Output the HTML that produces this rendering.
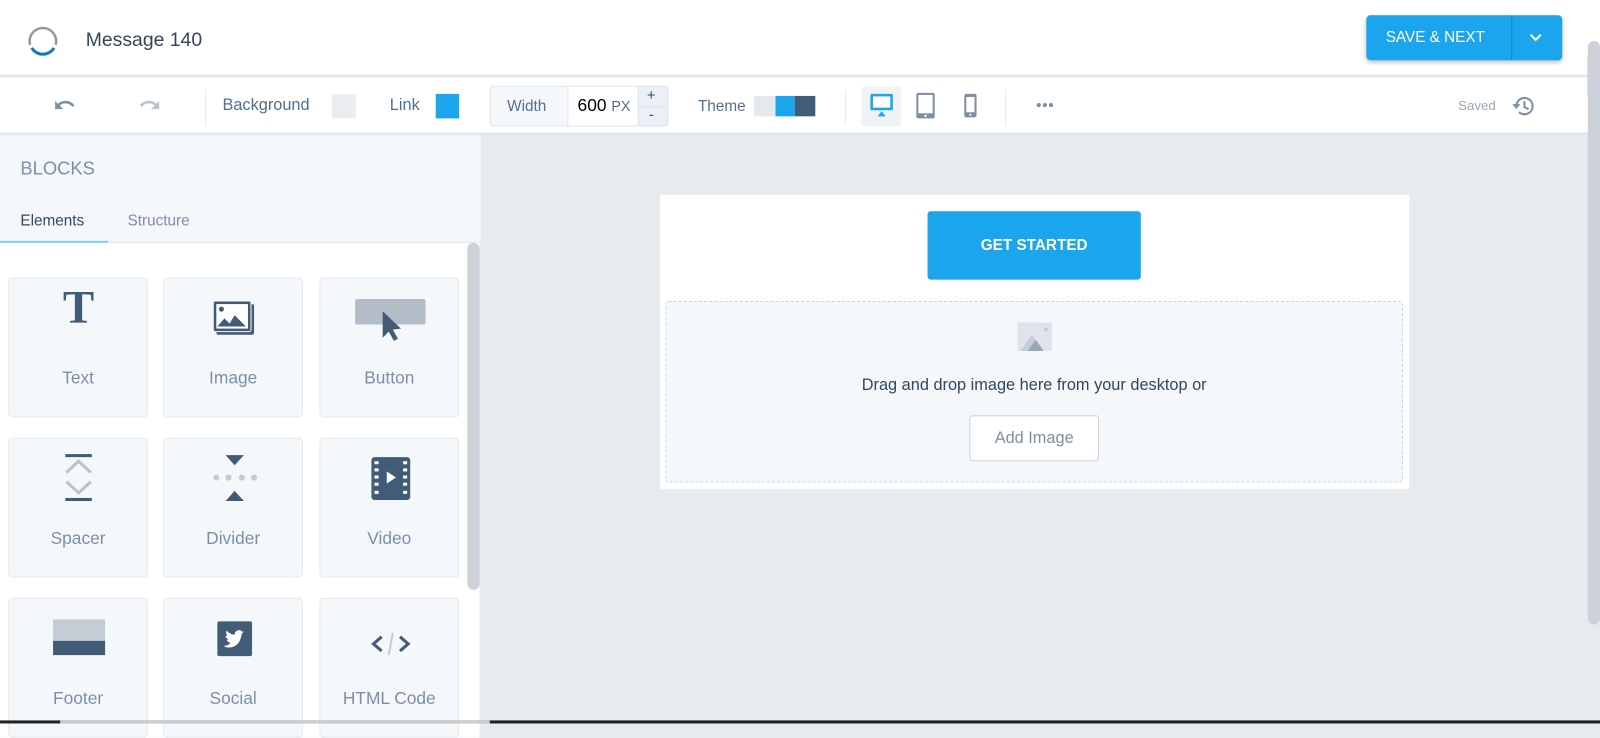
<!DOCTYPE html>
<html><head><meta charset="utf-8"><style>
*{box-sizing:border-box;margin:0;padding:0}
body{width:1600px;height:723px;overflow:hidden;font-family:"Liberation Sans",sans-serif;background:#e8ebee;position:relative;color:#33475b}
#w{position:absolute;left:0;top:0;width:1568px;height:709px;transform:scale(1.020408);transform-origin:0 0}
.abs{position:absolute}
.hdr{left:0;top:0;width:1568px;height:75px;background:#fff;border-bottom:2px solid #dfe3eb}
.tb{left:0;top:76px;width:1568px;height:56px;background:#fff;border-bottom:2px solid #dfe3eb}
.t{font-size:16px;color:#516f90}
.card{position:absolute;width:137px;height:137px;background:#f5f8fa;border:1px solid #e5e9ee;border-radius:4px}
.card span{position:absolute;left:0;right:0;top:88px;text-align:center;font-size:17px;color:#7c8fa6}
.card svg{position:absolute;left:0;top:0}
</style></head><body><div id="w">
<div class="abs hdr"></div>
<svg class="abs" style="left:24px;top:22px" width="36" height="36" viewBox="0 0 36 36"><path d="M5.5 22 A13 13 0 1 1 30.5 22" fill="none" stroke="#999" stroke-width="2.5"/><path d="M7 25 A13 13 0 0 0 29 25" fill="none" stroke="#0f7ac0" stroke-width="3"/></svg>
<div class="abs" style="left:84px;top:29px;font-size:19px;color:#33475b">Message 140</div>
<div class="abs" style="left:1339px;top:15px;width:192px;height:44px;background:#1ba5ec;border-radius:4px;box-shadow:0 2px 4px rgba(0,0,0,.25)"></div>
<div class="abs" style="left:1481px;top:15px;width:1px;height:44px;background:#1883be"></div>
<div class="abs" style="left:1358px;top:28px;font-size:15px;color:#fff">SAVE &amp; NEXT</div>
<svg class="abs" style="left:1497px;top:31px" width="16" height="12"><path d="M3 3l5 5 5-5" fill="none" stroke="#fff" stroke-width="2"/></svg>
<div class="abs tb"></div>
<div class="abs" style="left:1556px;top:50px;width:12px;height:48px;background:#1ba5ec;border-radius:6px 0 0 6px"></div>
<svg class="abs" style="left:52px;top:94px" width="24" height="18"><path d="M4 12 C6 5 15 4 20 10" fill="none" stroke="#7c8fa6" stroke-width="2.5"/><path d="M2 5v8h8z" fill="#7c8fa6"/></svg>
<svg class="abs" style="left:134px;top:94px" width="24" height="18"><path d="M20 12 C18 5 9 4 4 10" fill="none" stroke="#b8c3cf" stroke-width="2.5"/><path d="M22 5v8h-8z" fill="#b8c3cf"/></svg>
<div class="abs" style="left:201px;top:88px;width:1px;height:35px;background:#e5e9ee"></div>
<div class="abs t" style="left:218px;top:95px">Background</div>
<div class="abs" style="left:325px;top:92px;width:24px;height:24px;background:#eaedf0;border:1px solid #f0f2f4"></div>
<div class="abs t" style="left:382px;top:95px">Link</div>
<div class="abs" style="left:427px;top:92px;width:23px;height:24px;background:#1ba5ec"></div>
<div class="abs" style="left:480px;top:84px;width:175px;height:40px;border:1px solid #dfe3eb;border-radius:3px;background:#f5f8fa"></div>
<div class="abs" style="left:556px;top:85px;width:69px;height:38px;background:#fff;border-left:1px solid #dfe3eb"></div>
<div class="abs" style="left:625px;top:85px;width:29px;height:38px;background:#eaf0f6;border-left:1px solid #dfe3eb"></div>
<div class="abs" style="left:626px;top:104px;width:28px;height:1px;background:#dfe3eb"></div>
<div class="abs" style="left:634px;top:85px;font-size:14px">+</div>
<div class="abs" style="left:636px;top:104px;font-size:14px">-</div>
<div class="abs" style="left:497px;top:96px;font-size:15px;color:#516f90">Width</div>
<div class="abs" style="left:566px;top:94px;font-size:17px;color:#000">600 <span style="font-size:14px;color:#516f90">PX</span></div>
<div class="abs t" style="left:684px;top:96px;font-size:15px">Theme</div>
<div class="abs" style="left:739px;top:94px;width:21px;height:20px;background:#e5e9ee"></div>
<div class="abs" style="left:760px;top:94px;width:19px;height:20px;background:#1ba5ec"></div>
<div class="abs" style="left:779px;top:94px;width:20px;height:20px;background:#425b76"></div>
<div class="abs" style="left:828px;top:88px;width:1px;height:35px;background:#e5e9ee"></div>
<div class="abs" style="left:844px;top:85px;width:39px;height:39px;background:#f0f3f6;border-radius:3px"></div>
<svg class="abs" style="left:852px;top:91px" width="24" height="24"><rect x="1" y="1" width="22" height="16" rx="1" fill="#1ba5ec"/><rect x="3.5" y="3.5" width="17" height="11" fill="#fff"/><path d="M8 23l4-5 4 5z" fill="#1ba5ec"/></svg>
<svg class="abs" style="left:897px;top:90px" width="20" height="27"><rect x="1" y="1" width="18" height="25" rx="2" fill="#7c8fa6"/><rect x="3" y="3" width="14" height="18" fill="#fff"/><circle cx="10" cy="23.5" r="1.2" fill="#fff"/></svg>
<svg class="abs" style="left:944px;top:91px" width="14" height="25"><rect x="1" y="1" width="12" height="23" rx="2" fill="#7c8fa6"/><rect x="3" y="4" width="8" height="15" fill="#fff"/><circle cx="7" cy="21.5" r="1" fill="#fff"/></svg>
<div class="abs" style="left:985px;top:88px;width:1px;height:35px;background:#e5e9ee"></div>
<svg class="abs" style="left:1015px;top:99px" width="20" height="8"><g fill="#7c8fa6"><circle cx="3" cy="4" r="2"/><circle cx="9" cy="4" r="2"/><circle cx="15" cy="4" r="2"/></g></svg>
<div class="abs" style="left:1429px;top:96px;font-size:13px;color:#99a8b8">Saved</div>
<svg class="abs" style="left:1481px;top:92px" width="24" height="24"><path d="M5 12a8 8 0 1 1 2.5 5.8" fill="none" stroke="#7c8fa6" stroke-width="2"/><path d="M1 10h8l-4 5z" fill="#7c8fa6"/><path d="M13 7v6l4 2" fill="none" stroke="#7c8fa6" stroke-width="2"/></svg>
<!-- left panel -->
<div class="abs" style="left:0;top:133px;width:471px;height:590px;background:#fff;border-right:1px solid #dfe3eb"></div>
<div class="abs" style="left:0;top:133px;width:471px;height:105px;background:#f5f8fa;border-bottom:1px solid #dfe3eb"></div>
<div class="abs" style="left:20px;top:155px;font-size:18px;color:#7c8fa6">BLOCKS</div>
<div class="abs" style="left:20px;top:208px;font-size:15px;color:#33475b">Elements</div>
<div class="abs" style="left:125px;top:208px;font-size:15px;color:#7c8fa6">Structure</div>
<div class="abs" style="left:0;top:236px;width:106px;height:2px;background:#7fd1ff"></div>
<div class="abs" style="left:458px;top:238px;width:12px;height:340px;background:#cbd2da;border-radius:6px"></div>
<div class="card" style="left:8px;top:272px"><svg width="137" height="90"><text x="68" y="43" text-anchor="middle" font-family="Liberation Serif" font-weight="bold" font-size="46" fill="#425b76">T</text></svg><span>Text</span></div>
<div class="card" style="left:160px;top:272px"><svg width="137" height="90"><rect x="51" y="25" width="37" height="30" rx="2" fill="#425b76"/><rect x="48" y="22" width="37" height="30" rx="2" fill="#425b76" stroke="#f5f8fa" stroke-width="1"/><rect x="51" y="25" width="31" height="24" fill="#fff"/><circle cx="56" cy="30" r="2.5" fill="#425b76"/><path d="M52 47l7-8 5 5 5-8 11 11z" fill="#425b76"/></svg><span>Image</span></div>
<div class="card" style="left:313px;top:272px"><svg width="137" height="90"><rect x="34" y="20" width="69" height="25" rx="2" fill="#b2bdc8"/><path d="M61 32v26l6-6 5 9 4-2-5-9 8-1z" fill="#425b76"/></svg><span>Button</span></div>
<div class="card" style="left:8px;top:429px"><svg width="137" height="90"><rect x="55" y="15" width="26" height="3" fill="#425b76"/><path d="M56 33l12-11 12 11M56 42l12 11 12-11" fill="none" stroke="#b8c3cf" stroke-width="3"/><rect x="55" y="58" width="26" height="3" fill="#425b76"/></svg><span>Spacer</span></div>
<div class="card" style="left:160px;top:429px"><svg width="137" height="90"><path d="M60 16h18l-9 10z" fill="#425b76"/><g fill="#c4ccd5"><circle cx="51" cy="38" r="3"/><circle cx="63" cy="38" r="3"/><circle cx="76" cy="38" r="3"/><circle cx="88" cy="38" r="3"/></g><path d="M60 61h18l-9-10z" fill="#425b76"/></svg><span>Divider</span></div>
<div class="card" style="left:313px;top:429px"><svg width="137" height="90"><rect x="50" y="18" width="38" height="42" rx="3" fill="#425b76"/><g fill="#fff"><rect x="53" y="22" width="4" height="3"/><rect x="53" y="29" width="4" height="3"/><rect x="53" y="36" width="4" height="3"/><rect x="53" y="43" width="4" height="3"/><rect x="53" y="51" width="4" height="3"/><rect x="81" y="22" width="4" height="3"/><rect x="81" y="29" width="4" height="3"/><rect x="81" y="36" width="4" height="3"/><rect x="81" y="43" width="4" height="3"/><rect x="81" y="51" width="4" height="3"/><path d="M65 32v12l9-6z"/></g></svg><span>Video</span></div>
<div class="card" style="left:8px;top:586px"><svg width="137" height="90"><rect x="43" y="20" width="51" height="21" fill="#c4ccd5"/><rect x="43" y="41" width="51" height="14" fill="#425b76"/></svg><span>Footer</span></div>
<div class="card" style="left:160px;top:586px"><svg width="137" height="90"><rect x="52" y="22" width="34" height="34" rx="2" fill="#425b76"/><path d="M60 47c6 2 13-1 15-9l1-4 2-2-2 0c-1-2-4-2-6 0-1 1-1 2-1 3-3 0-6-2-8-4-1 2 0 4 1 5l-2 0c0 2 2 3 3 4l-2 0c1 2 3 3 4 3-2 2-4 3-7 3z" fill="#fff"/></svg><span>Social</span></div>
<div class="card" style="left:313px;top:586px"><svg width="137" height="90"><path d="M60 37l-8 7 8 7M78 37l8 7-8 7" fill="none" stroke="#425b76" stroke-width="3"/><path d="M71 33l-4 22" stroke="#c4ccd5" stroke-width="2"/></svg><span>HTML Code</span></div>
<!-- canvas -->
<div class="abs" style="left:647px;top:191px;width:734px;height:288px;background:#fff"></div>
<div class="abs" style="left:909px;top:207px;width:209px;height:67px;background:#1ba5ec;border-radius:3px;color:#fff;font-weight:bold;font-size:15px;text-align:center;line-height:67px">GET STARTED</div>
<div class="abs" style="left:652px;top:295px;width:723px;height:178px;background:#f5f8fa;border:1px dashed #cbd2da;border-radius:3px"></div>
<svg class="abs" style="left:997px;top:316px" width="34" height="28"><rect width="34" height="28" fill="#dfe3eb"/><path d="M3 28l11-16 11 16z" fill="#c4ccd5"/><path d="M10 28l8-11 8 11z" fill="#99a8b8"/><circle cx="28" cy="7" r="2" fill="#c4ccd5"/></svg>
<div class="abs" style="left:652px;top:369px;width:723px;text-align:center;font-size:16px;color:#33475b">Drag and drop image here from your desktop or</div>
<div class="abs" style="left:950px;top:407px;width:127px;height:45px;border:1px solid #cbd2da;border-radius:3px;background:#fff;text-align:center;line-height:43px;font-size:16px;color:#7c8fa6">Add Image</div>
<div class="abs" style="left:1556px;top:40px;width:12px;height:572px;background:#cbd2da;border-radius:6px"></div>
<div class="abs" style="left:0;top:706px;width:1568px;height:3px;background:#222"></div>
<div class="abs" style="left:59px;top:706px;width:421px;height:3px;background:#ccc"></div>
</div></body></html>
